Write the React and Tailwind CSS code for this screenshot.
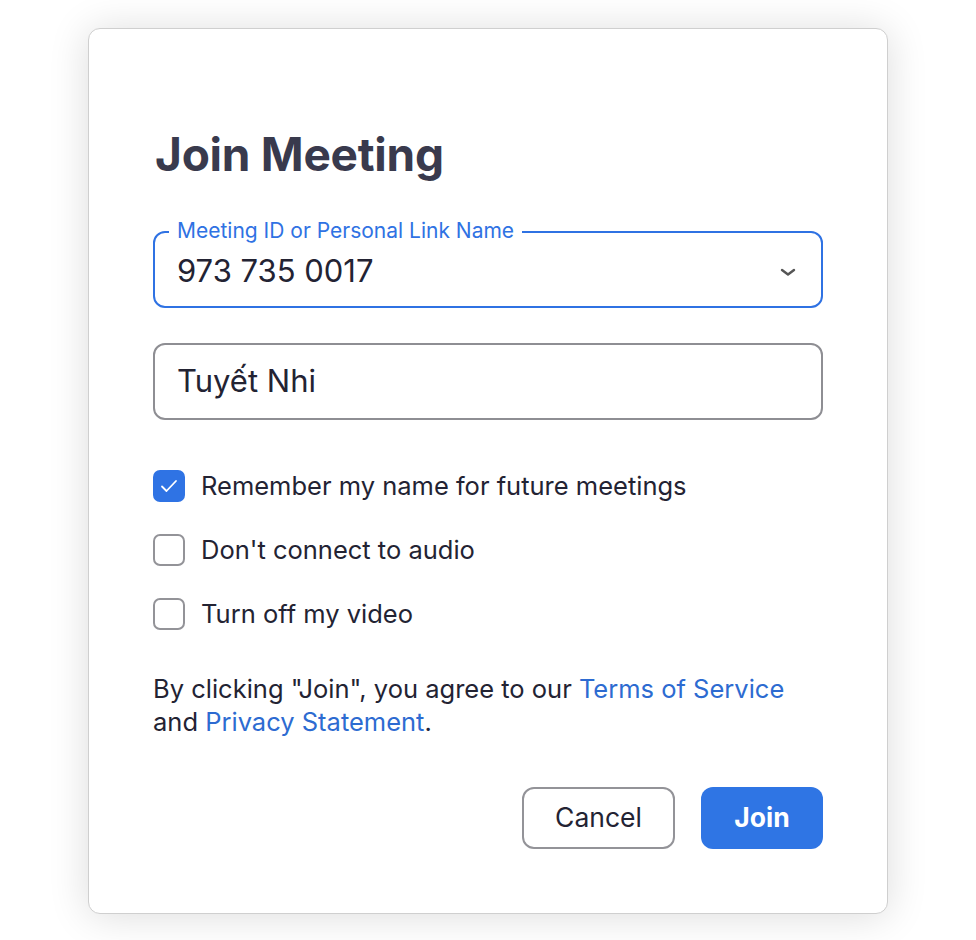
import { useState } from "react";

function Check({ checked, label, onToggle }) {
  return (
    <label className="flex items-center gap-[16px] cursor-pointer h-8" onClick={onToggle}>
      {checked ? (
        <span className="w-8 h-8 rounded-[7px] bg-[#2f73e4] flex items-center justify-center">
          <svg width="18" height="14" viewBox="0 0 18 14" fill="none">
            <path d="M2 7.5 L6.5 12 L16 2" stroke="white" strokeWidth="1.8" strokeLinecap="round" strokeLinejoin="round" />
          </svg>
        </span>
      ) : (
        <span className="w-8 h-8 rounded-[7px] border-2 border-[#939398] bg-white" />
      )}
      <span className="text-[25.5px] text-[#232333]">{label}</span>
    </label>
  );
}

export default function App() {
  const [remember, setRemember] = useState(true);
  const [audio, setAudio] = useState(false);
  const [video, setVideo] = useState(false);

  return (
    <div className="min-h-[940px] bg-white pt-[28px] flex justify-center font-['Inter',sans-serif]">
      <div className="w-[800px] h-[886px] bg-white rounded-[12px] border border-[#cfcfcf] shadow-[0_2px_40px_rgba(0,0,0,0.14)] px-16 pt-[102px]">
        <h1 className="text-[46px] font-bold text-[#393a4d] leading-none tracking-[-0.25px] pl-[2px]">Join Meeting</h1>

        <div className="relative mt-[54px] h-[77px] rounded-[12px] border-2 border-[#2f72e3] flex items-center pl-[22px] pr-6">
          <span className="absolute -top-[15px] left-[14px] bg-white px-2 text-[21px] leading-[26px] text-[#2f72e3]">
            Meeting ID or Personal Link Name
          </span>
          <span className="text-[31px] text-[#232333] pt-1">973 735 0017</span>
          <svg className="ml-auto mt-1" width="18" height="10" viewBox="0 0 18 10" fill="none">
            <path d="M3 3 L9 7.5 L15 3" stroke="#555" strokeWidth="2.4" strokeLinecap="round" strokeLinejoin="round" />
          </svg>
        </div>

        <div className="mt-[35px] h-[77px] rounded-[12px] border-2 border-[#8e8e93] flex items-center pl-[22px]">
          <span className="text-[31px] text-[#232333]">Tuyết Nhi</span>
        </div>

        <div className="mt-[50px] flex flex-col gap-8">
          <Check checked={remember} label="Remember my name for future meetings" onToggle={() => setRemember(!remember)} />
          <Check checked={audio} label="Don't connect to audio" onToggle={() => setAudio(!audio)} />
          <Check checked={video} label="Turn off my video" onToggle={() => setVideo(!video)} />
        </div>

        <p className="mt-[42px] text-[25.5px] leading-[33px] text-[#232333]">
          By clicking "Join", you agree to our <span className="text-[#2d6bd1]">Terms of Service</span>
          <br />
          and <span className="text-[#2d6bd1]">Privacy Statement</span>.
        </p>

        <div className="mt-[49px] flex justify-end gap-[26px]">
          <button className="w-[153px] h-[62px] rounded-[12px] border-2 border-[#939398] bg-white text-[26.5px] text-[#232333]">
            Cancel
          </button>
          <button className="w-[122px] h-[62px] rounded-[12px] bg-[#2f75e4] text-[26.5px] font-bold text-white">
            Join
          </button>
        </div>
      </div>
    </div>
  );
}
